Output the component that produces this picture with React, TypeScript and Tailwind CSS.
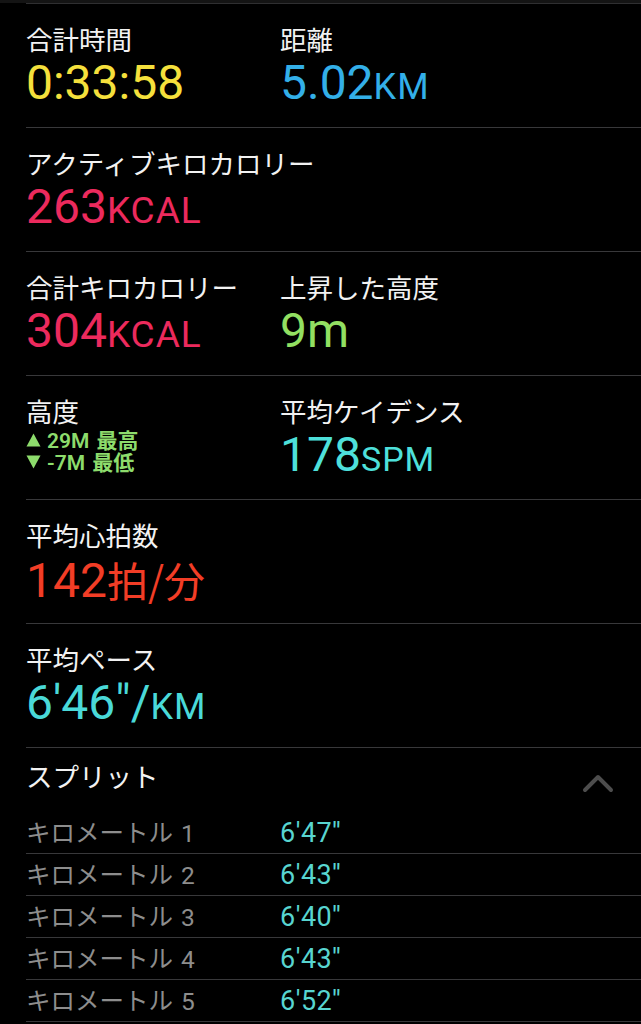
import React from "react";

const CJK = "font-['Noto_Sans_CJK_JP',sans-serif]";
const NUM = "font-['Roboto','Noto_Sans_CJK_JP',sans-serif]";

function Label({ children }: { children: React.ReactNode }) {
  return (
    <div className={`${CJK} text-[26.5px] leading-[30px] text-[#f2f2f2] whitespace-nowrap`}>
      {children}
    </div>
  );
}

function Value({ cls, children }: { cls: string; children: React.ReactNode }) {
  return (
    <div className={`${NUM} mt-[5px] text-[48px] leading-[48px] whitespace-nowrap ${cls}`}>
      {children}
    </div>
  );
}

function Section({ children, single }: { children: React.ReactNode; single?: boolean }) {
  return (
    <section
      className={`h-[124px] border-b border-[#38383a] pt-[20px] ${single ? "" : "grid grid-cols-[254px_1fr]"}`}
    >
      {children}
    </section>
  );
}

function Tri({ up }: { up: boolean }) {
  return (
    <svg width="15" height="14" viewBox="0 0 15 14" className="shrink-0">
      {up ? (
        <path d="M7.5 0.5 L14.5 13.5 L0.5 13.5 Z" fill="#8ddc6c" />
      ) : (
        <path d="M0.5 0.5 L14.5 0.5 L7.5 13.5 Z" fill="#8ddc6c" />
      )}
    </svg>
  );
}

const splits = [
  ["1", "6'47''"],
  ["2", "6'43''"],
  ["3", "6'40''"],
  ["4", "6'43''"],
  ["5", "6'52''"],
];

export default function App() {
  return (
    <div className="w-[641px] min-h-[1024px] bg-black overflow-hidden">
      <div className="h-[3px] bg-[#141414]" />
      <div className="pl-[26px]">
        <div className="border-t border-[#2f2f31]" />
        <Section>
          <div>
            <Label>合計時間</Label>
            <Value cls="text-[#f5e03c]">0:33:58</Value>
          </div>
          <div>
            <Label>距離</Label>
            <Value cls="text-[#33afe8]">
              5.02<span className="text-[36px] tracking-[1px]">KM</span>
            </Value>
          </div>
        </Section>
        <Section single>
          <Label>アクティブキロカロリー</Label>
          <Value cls="text-[#ec2a5d]">
            263<span className="text-[37px] tracking-[1px]">KCAL</span>
          </Value>
        </Section>
        <Section>
          <div>
            <Label>合計キロカロリー</Label>
            <Value cls="text-[#ec2a5d]">
              304<span className="text-[37px] tracking-[1px]">KCAL</span>
            </Value>
          </div>
          <div>
            <Label>上昇した高度</Label>
            <Value cls="text-[#92e062]">9m</Value>
          </div>
        </Section>
        <Section>
          <div>
            <Label>高度</Label>
            <div className={`${NUM} mt-[3px] text-[21px] leading-[22px] font-semibold text-[#8ddc6c]`}>
              <div className="flex items-center gap-[6px] h-[22px]">
                <Tri up />
                <span className="whitespace-nowrap">
                  29M <span className={`${CJK} ml-[2px]`}>最高</span>
                </span>
              </div>
              <div className="flex items-center gap-[6px] h-[22px]">
                <Tri up={false} />
                <span className="whitespace-nowrap">
                  -7M <span className={`${CJK} ml-[2px]`}>最低</span>
                </span>
              </div>
            </div>
          </div>
          <div>
            <Label>平均ケイデンス</Label>
            <Value cls="text-[#4ee0db]">
              178<span className="text-[34px] tracking-[1px]">SPM</span>
            </Value>
          </div>
        </Section>
        <Section single>
          <Label>平均心拍数</Label>
          <Value cls="text-[#f23d26]">
            142<span className={`${CJK} text-[41px]`}>拍/分</span>
          </Value>
        </Section>
        <Section single>
          <Label>平均ペース</Label>
          <Value cls="text-[#4ad9d8]">
            6'46"/<span className="text-[36px] tracking-[1px]">KM</span>
          </Value>
        </Section>
        <div className="h-[64px] flex justify-between items-start">
          <div className="pt-[13px]">
            <Label>スプリット</Label>
          </div>
          <svg width="36" height="22" viewBox="0 0 36 22" className="mt-[24px] mr-[25px]">
            <path
              d="M5 18 L18 5 L31 18"
              stroke="#4d4d4d"
              strokeWidth="4"
              fill="none"
              strokeLinecap="round"
              strokeLinejoin="round"
            />
          </svg>
        </div>
        {splits.map(([n, v]) => (
          <div
            key={n}
            className="h-[42px] border-b border-[#38383a] grid grid-cols-[254px_1fr] items-center"
          >
            <span className={`${CJK} text-[24.5px] leading-[28px] text-[#8d8d8d] whitespace-nowrap`}>
              キロメートル<span className={`${NUM} ml-[8px]`}>{n}</span>
            </span>
            <span className={`${NUM} text-[27px] leading-[28px] tracking-[0.5px] text-[#58d5d0]`}>{v}</span>
          </div>
        ))}
      </div>
    </div>
  );
}
